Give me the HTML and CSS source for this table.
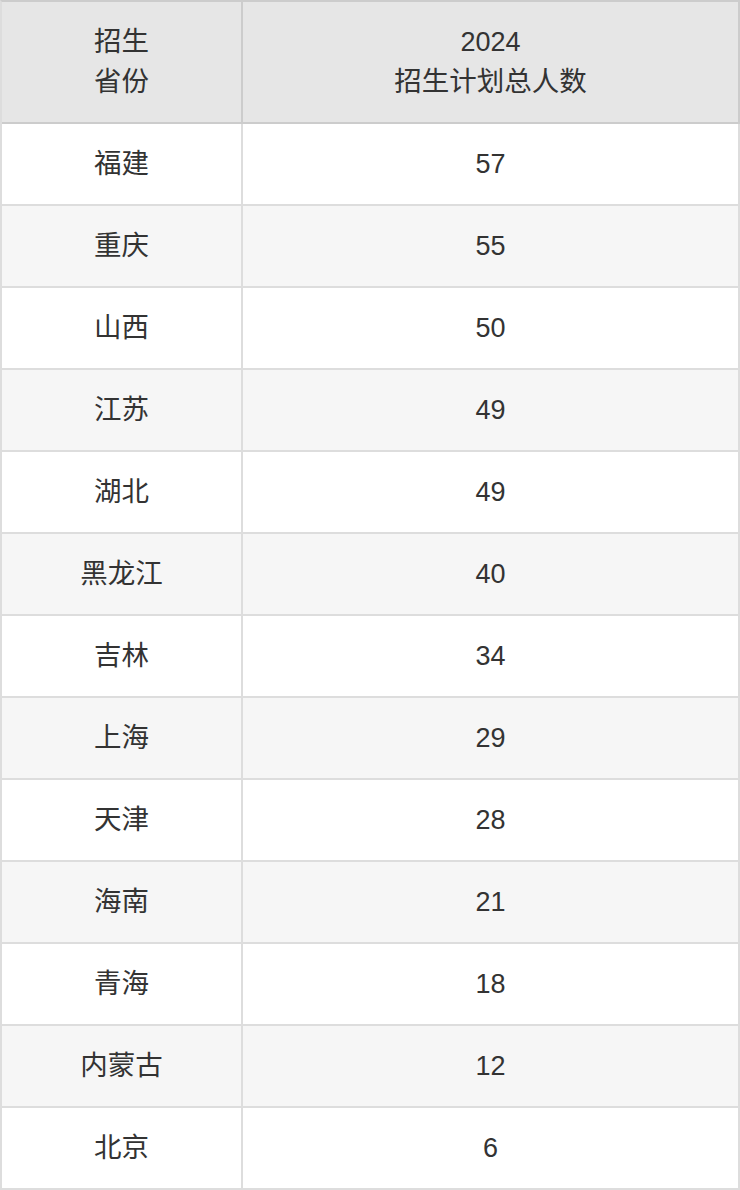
FILE: index.html
```html
<!DOCTYPE html>
<html lang="zh">
<head>
<meta charset="utf-8">
<link rel="stylesheet" href="styles.css">
</head>
<body>
<table class="plan">
  <thead>
    <tr>
      <th class="c1"><span class="zh">招生<br>省份</span></th>
      <th class="c2">2024<br><span class="zh">招生计划总人数</span></th>
    </tr>
  </thead>
  <tbody>
    <tr><td class="zh">福建</td><td>57</td></tr>
    <tr><td class="zh">重庆</td><td>55</td></tr>
    <tr><td class="zh">山西</td><td>50</td></tr>
    <tr><td class="zh">江苏</td><td>49</td></tr>
    <tr><td class="zh">湖北</td><td>49</td></tr>
    <tr><td class="zh">黑龙江</td><td>40</td></tr>
    <tr><td class="zh">吉林</td><td>34</td></tr>
    <tr><td class="zh">上海</td><td>29</td></tr>
    <tr><td class="zh">天津</td><td>28</td></tr>
    <tr><td class="zh">海南</td><td>21</td></tr>
    <tr><td class="zh">青海</td><td>18</td></tr>
    <tr><td class="zh">内蒙古</td><td>12</td></tr>
    <tr><td class="zh">北京</td><td>6</td></tr>
  </tbody>
</table>
</body>
</html>
```
FILE: styles.css
```css
html, body {
  margin: 0;
  padding: 0;
  background: #ffffff;
}
.plan {
  width: 740px;
  border-spacing: 0;
  border-collapse: separate;
  table-layout: fixed;
  border-left: 2px solid #dddddd;
  border-top: 2px solid #cccccc;
  font-family: "Liberation Sans", "Noto Sans CJK SC", sans-serif;
  font-size: 27px;
  line-height: 40px;
  color: #333333;
}
.plan th, .plan td {
  padding: 20px 0;
  height: 40px;
  text-align: center;
  border-right: 2px solid #dddddd;
  border-bottom: 2px solid #dddddd;
  font-weight: normal;
}
.plan .zh {
  font-size: 27.5px;
  line-height: 40px;
}
.plan th {
  background: #e6e6e6;
  border-right-color: #cccccc;
  border-bottom-color: #cccccc;
}
.plan .c1 {
  width: 239px;
}
.plan tbody tr:nth-child(even) td {
  background: #f6f6f6;
}
```
